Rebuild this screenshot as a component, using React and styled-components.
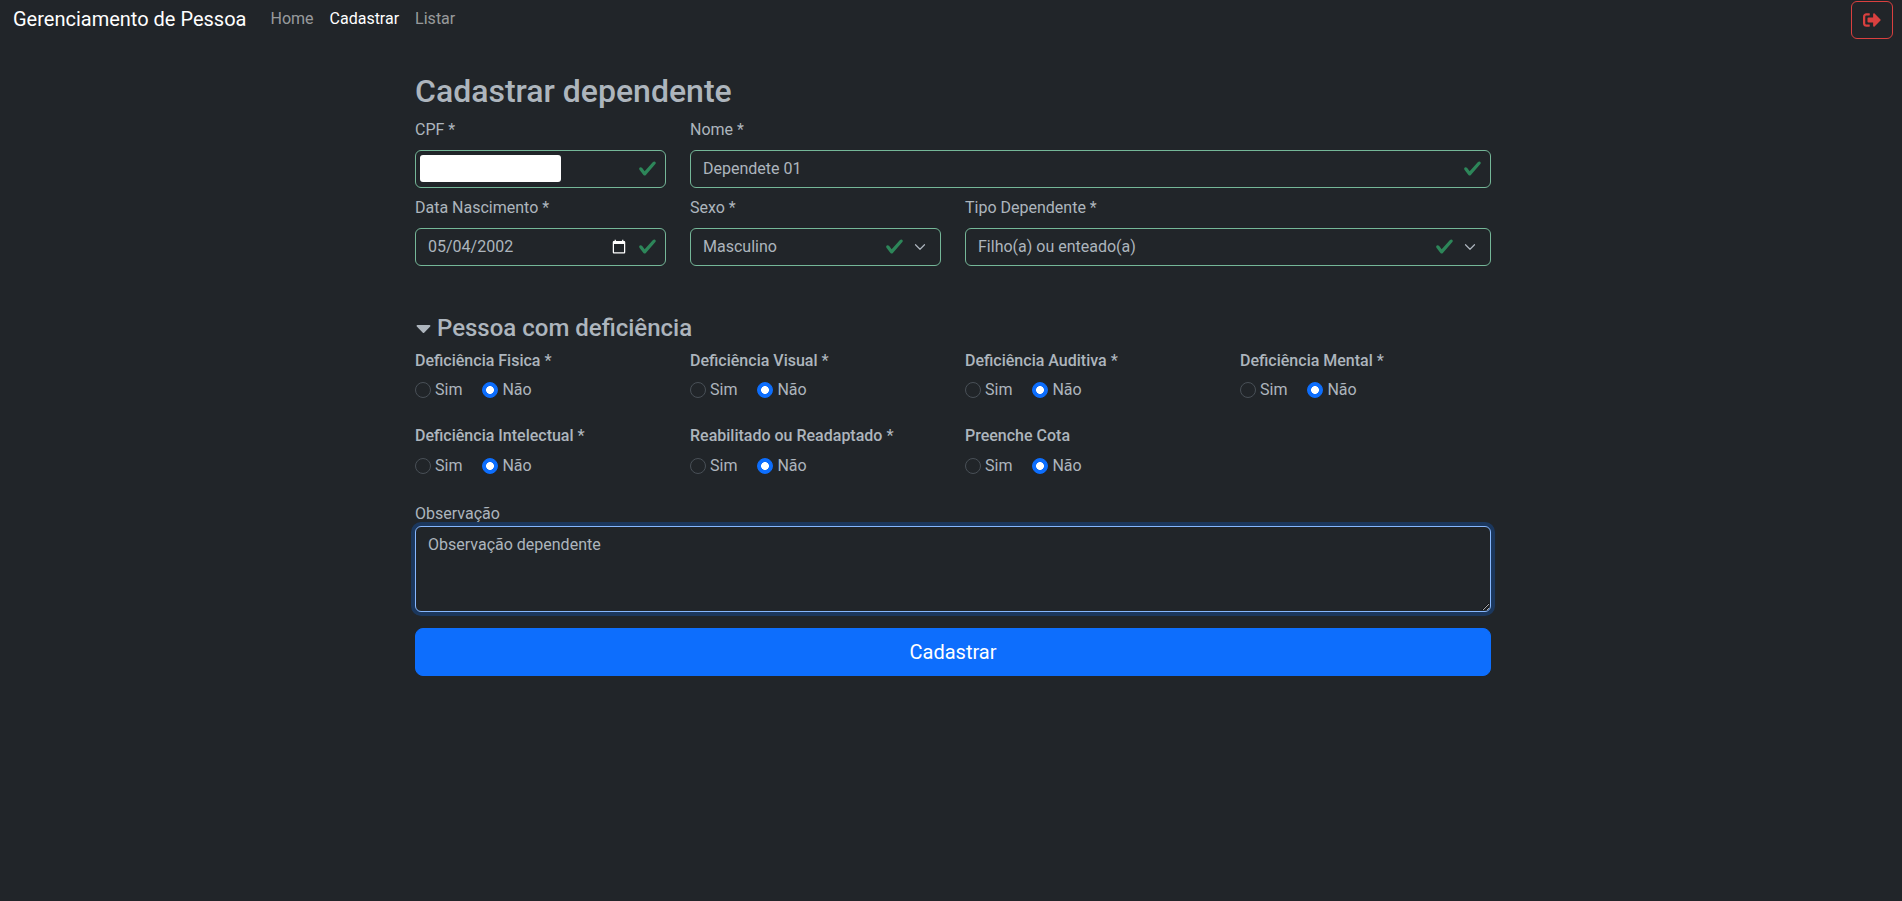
import React from "react";
import styled, { createGlobalStyle } from "styled-components";
import { FaCaretDown, FaSignOutAlt } from "react-icons/fa";

const checkIcon =
	"url(\"data:image/svg+xml,%3csvg xmlns='http://www.w3.org/2000/svg' viewBox='0 0 8 8'%3e%3cpath fill='%232d8659' d='M2.3 6.73.6 4.53c-.4-1.04.46-1.4 1.1-.8l1.1 1.4 3.4-3.8c.6-.63 1.6-.27 1.2.7l-4 4.6c-.43.5-.8.4-1.1.1z'/%3e%3c/svg%3e\")";
const chevronIcon =
	"url(\"data:image/svg+xml,%3csvg xmlns='http://www.w3.org/2000/svg' viewBox='0 0 16 16'%3e%3cpath fill='none' stroke='%23adb5bd' stroke-linecap='round' stroke-linejoin='round' stroke-width='1.6' d='m2 5 6 6 6-6'/%3e%3c/svg%3e\")";

const GlobalStyle = createGlobalStyle`
	html {
		color-scheme: dark;
	}
	body {
		margin: 0;
		min-height: 100vh;
		background-color: #212529;
		color: #adb5bd;
		font-family: Roboto, "Liberation Sans", sans-serif;
		font-size: 16px;
		line-height: 24px;
	}
	* {
		box-sizing: border-box;
	}
`;

const NavBar = styled.nav`
	display: flex;
	align-items: flex-start;
	height: 40px;
	padding: 1px 9px 0 13px;
`;

const Brand = styled.a`
	color: #fff;
	font-size: 20px;
	line-height: 36px;
	margin-right: 16px;
`;

const NavItem = styled.a`
	padding: 0 8px;
	line-height: 36px;
	color: ${(props) => (props.$active ? "#fff" : "rgba(255, 255, 255, 0.55)")};
`;

const LogoutButton = styled.button`
	display: flex;
	align-items: center;
	justify-content: center;
	width: 42px;
	height: 38px;
	margin-left: auto;
	padding: 0;
	background: transparent;
	border: 1px solid #d9403f;
	border-radius: 6px;
	color: #d9403f;
	font-size: 18px;
`;

const Page = styled.main`
	width: 1076px;
	margin: 32px 0 0 415px;
`;

const Title = styled.h2`
	margin: 0 0 7.2px;
	font-size: 32px;
	font-weight: 500;
	line-height: 38.4px;
`;

const FormGrid = styled.div`
	display: grid;
	grid-template-columns: repeat(12, 1fr);
	column-gap: 24px;
	row-gap: 8px;
`;

const Field = styled.div`
	position: relative;
	grid-column: span ${(props) => props.$span};
`;

const Label = styled.label`
	display: block;
	margin-bottom: 8px;
	line-height: 24px;
`;

const baseControl = `
	display: block;
	width: 100%;
	height: 38px;
	padding: 6px 12px;
	background-color: #212529;
	color: #adb5bd;
	font-family: Roboto, "Liberation Sans", sans-serif;
	font-size: 16px;
	line-height: 24px;
	border: 1px solid #75b798;
	border-radius: 6px;
	outline: none;
`;

const Input = styled.input`
	${baseControl}
	padding-right: 36px;
	background-image: ${checkIcon};
	background-repeat: no-repeat;
	background-position: right 9px center;
	background-size: 18.5px 18.5px;

	&::-webkit-datetime-edit-day-field,
	&::-webkit-datetime-edit-month-field,
	&::-webkit-datetime-edit-year-field,
	&::-webkit-datetime-edit-text {
		padding: 0;
	}
`;

const Select = styled.select`
	${baseControl}
	appearance: none;
	padding-right: 66px;
	background-image: ${chevronIcon}, ${checkIcon};
	background-repeat: no-repeat;
	background-position: right 12px center, center right 37px;
	background-size: 16px 12px, 18.5px 18.5px;
`;

const Redacted = styled.span`
	position: absolute;
	left: 5px;
	top: 37px;
	width: 141px;
	height: 27px;
	background: #fff;
	border-radius: 3px;
`;

const Section = styled.details`
	margin-top: 48px;
`;

const Summary = styled.summary`
	display: flex;
	align-items: center;
	height: 29px;
	list-style: none;
`;

const Caret = styled(FaCaretDown)`
	width: 15px;
	height: 24px;
	margin-left: 1px;
`;

const SectionTitle = styled.h4`
	margin: 0 0 0 6px;
	font-size: 24px;
	font-weight: 500;
	line-height: 29px;
`;

const RadioGrid = styled.div`
	display: grid;
	grid-template-columns: repeat(4, 251px);
	column-gap: 24px;
	row-gap: 22.1px;
	margin-top: 6.5px;
`;

const RadioTitle = styled.div`
	font-weight: 500;
	line-height: 24px;
	margin-bottom: 5.2px;
`;

const RadioRow = styled.div`
	display: flex;
	gap: 20px;
`;

const RadioOption = styled.label`
	display: flex;
	align-items: center;
	gap: 4px;
	line-height: 24px;
`;

const Radio = styled.input`
	appearance: none;
	width: 16px;
	height: 16px;
	margin: 0;
	border-radius: 50%;
	border: 1px solid ${(props) => (props.defaultChecked ? "#0d6efd" : "#495057")};
	background: ${(props) =>
		props.defaultChecked
			? "radial-gradient(circle, #fff 0 3.6px, #0d6efd 4.2px)"
			: "#212529"};
`;

const NoteLabel = styled.label`
	display: block;
	margin-top: 24.5px;
	line-height: 24px;
`;

const NoteArea = styled.textarea`
	${baseControl}
	height: 86px;
	border-color: #86b7fe;
	box-shadow: 0 0 0 4px rgba(13, 110, 253, 0.25);
`;

const SubmitButton = styled.button`
	display: block;
	width: 100%;
	height: 48px;
	margin-top: 16px;
	background: #0d6efd;
	color: #fff;
	border: 1px solid #0d6efd;
	border-radius: 8px;
	font-family: inherit;
	font-size: 20px;
	line-height: 30px;
`;

const deficiencias = [
	"Deficiência Fisica *",
	"Deficiência Visual *",
	"Deficiência Auditiva *",
	"Deficiência Mental *",
	"Deficiência Intelectual *",
	"Reabilitado ou Readaptado *",
	"Preenche Cota",
];

function App() {
	return (
		<>
			<GlobalStyle />
			<NavBar>
				<Brand>Gerenciamento de Pessoa</Brand>
				<NavItem>Home</NavItem>
				<NavItem $active>Cadastrar</NavItem>
				<NavItem>Listar</NavItem>
				<LogoutButton aria-label="Sair">
					<FaSignOutAlt />
				</LogoutButton>
			</NavBar>
			<Page>
				<Title>Cadastrar dependente</Title>
				<FormGrid>
					<Field $span={3}>
						<Label>CPF *</Label>
						<Input type="text" />
						<Redacted />
					</Field>
					<Field $span={9}>
						<Label>Nome *</Label>
						<Input type="text" defaultValue="Dependete 01" />
					</Field>
					<Field $span={3}>
						<Label>Data Nascimento *</Label>
						<Input type="date" defaultValue="2002-05-04" />
					</Field>
					<Field $span={3}>
						<Label>Sexo *</Label>
						<Select defaultValue="M">
							<option value="M">Masculino</option>
							<option value="F">Feminino</option>
						</Select>
					</Field>
					<Field $span={6}>
						<Label>Tipo Dependente *</Label>
						<Select defaultValue="F">
							<option value="F">Filho(a) ou enteado(a)</option>
						</Select>
					</Field>
				</FormGrid>
				<Section open>
					<Summary>
						<Caret />
						<SectionTitle>Pessoa com deficiência</SectionTitle>
					</Summary>
					<RadioGrid>
						{deficiencias.map((nome, i) => (
							<div key={nome}>
								<RadioTitle>{nome}</RadioTitle>
								<RadioRow>
									<RadioOption>
										<Radio type="radio" name={"d" + i} />
										Sim
									</RadioOption>
									<RadioOption>
										<Radio type="radio" name={"d" + i} defaultChecked />
										Não
									</RadioOption>
								</RadioRow>
							</div>
						))}
					</RadioGrid>
				</Section>
				<NoteLabel>Observação</NoteLabel>
				<NoteArea defaultValue="Observação dependente" />
				<SubmitButton>Cadastrar</SubmitButton>
			</Page>
		</>
	);
}

export default App;
